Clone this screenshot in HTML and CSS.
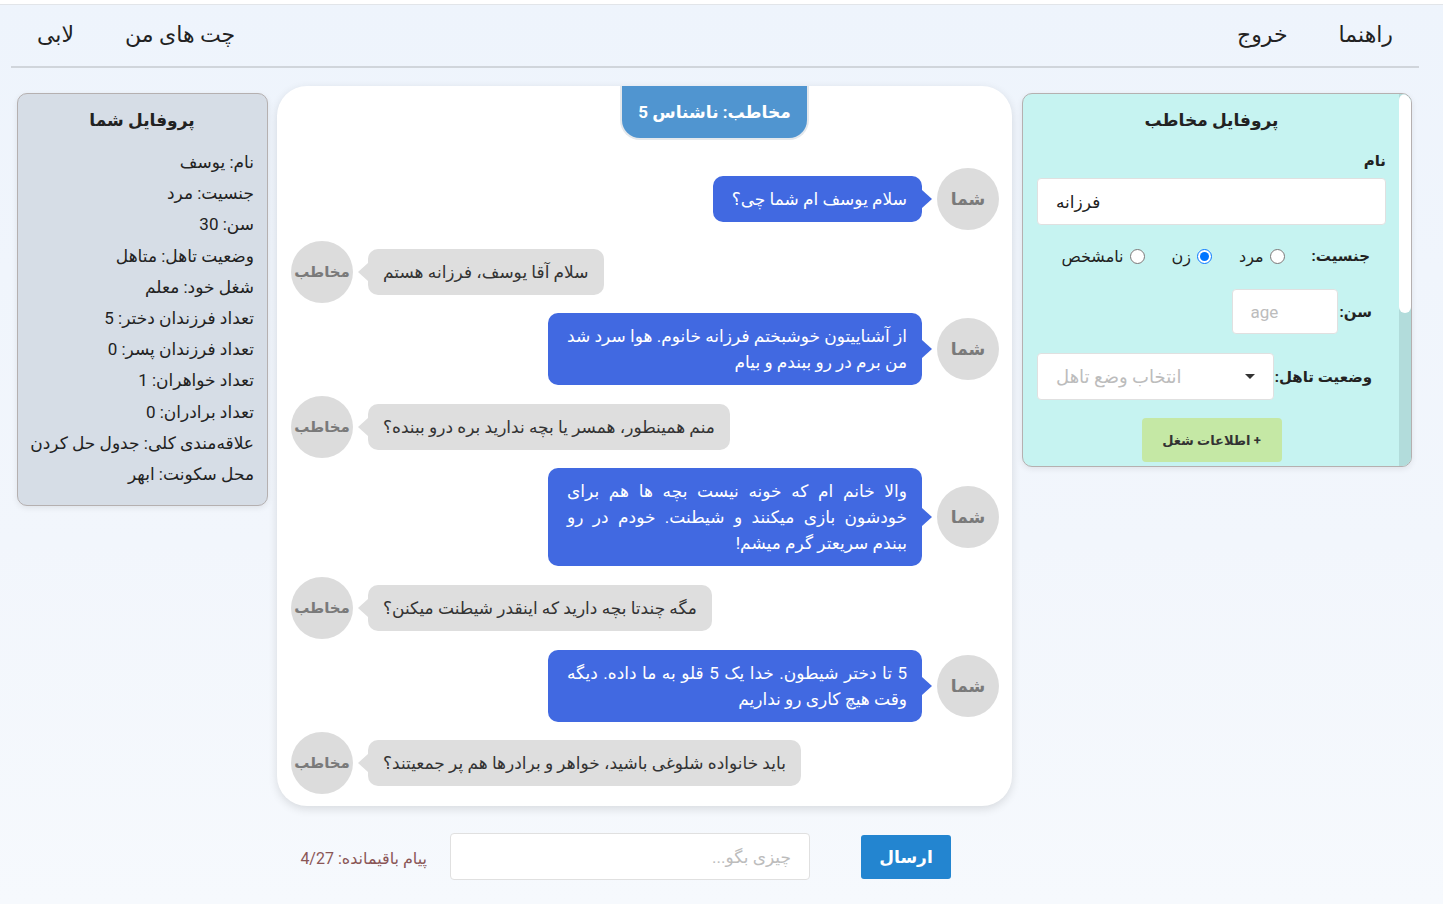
FILE: index.html
```html
<!DOCTYPE html>
<html lang="fa" dir="rtl">
<head>
<meta charset="utf-8">
<title>چت</title>
<link rel="stylesheet" href="styles.css">
</head>
<body>
<div class="page">
  <nav class="nav">
    <div class="nav-group">
      <a class="nav-link">راهنما</a>
      <a class="nav-link">خروج</a>
    </div>
    <div class="nav-group">
      <a class="nav-link">چت های من</a>
      <a class="nav-link">لابی</a>
    </div>
  </nav>

  <main class="layout">
    <aside class="contact-card">
      <div class="scrollbar"><div class="scroll-thumb"></div></div>
      <div class="contact-inner">
        <h3 class="card-title">پروفایل مخاطب</h3>
        <label class="field-label">نام</label>
        <input class="text-input name-input" type="text" value="فرزانه" dir="ltr">
        <div class="gender-row">
          <span class="inline-label">جنسیت:</span>
          <label class="radio"><input type="radio" name="g"> مرد</label>
          <label class="radio"><input type="radio" name="g" checked> زن</label>
          <label class="radio"><input type="radio" name="g"> نامشخص</label>
        </div>
        <div class="age-row">
          <span class="inline-label">سن:</span>
          <input class="text-input age-input" type="text" placeholder="age" dir="ltr">
        </div>
        <div class="marital-row">
          <span class="inline-label">وضعیت تاهل:</span>
          <div class="select-box">
            <span class="caret"></span>
            <span class="select-placeholder">انتخاب وضع تاهل</span>
          </div>
        </div>
        <div class="job-wrap">
          <button class="job-btn">+ اطلاعات شغل</button>
        </div>
      </div>
    </aside>

    <section class="chat-col">
      <div class="chat-card">
        <div class="chat-tab">مخاطب: ناشناس 5</div>
        <div class="messages">
          <div class="msg me">
            <div class="avatar">شما</div>
            <div class="bubble">سلام یوسف ام شما چی؟</div>
          </div>
          <div class="msg other">
            <div class="avatar">مخاطب</div>
            <div class="bubble">سلام آقا یوسف، فرزانه هستم</div>
          </div>
          <div class="msg me">
            <div class="avatar">شما</div>
            <div class="bubble">از آشناییتون خوشبختم فرزانه خانوم. هوا سرد شد من برم در رو ببندم و بیام</div>
          </div>
          <div class="msg other">
            <div class="avatar">مخاطب</div>
            <div class="bubble">منم همینطور، همسر یا بچه ندارید بره درو ببنده؟</div>
          </div>
          <div class="msg me">
            <div class="avatar">شما</div>
            <div class="bubble">والا خانم ام که خونه نیست بچه ها هم برای خودشون بازی میکنند و شیطنت. خودم در رو ببندم سریعتر گرم میشم!</div>
          </div>
          <div class="msg other">
            <div class="avatar">مخاطب</div>
            <div class="bubble">مگه چندتا بچه دارید که اینقدر شیطنت میکنن؟</div>
          </div>
          <div class="msg me">
            <div class="avatar">شما</div>
            <div class="bubble">5 تا دختر شیطون. خدا یک 5 قلو به ما داده. دیگه وقت هیچ کاری رو نداریم</div>
          </div>
          <div class="msg other">
            <div class="avatar">مخاطب</div>
            <div class="bubble">باید خانواده شلوغی باشید، خواهر و برادرها هم پر جمعیتند؟</div>
          </div>
        </div>
      </div>
      <div class="composer">
        <button class="send-btn">ارسال</button>
        <input class="text-input msg-input" type="text" placeholder="چیزی بگو...">
        <span class="remaining">پیام باقیمانده: 4/27</span>
      </div>
    </section>

    <aside class="my-card">
      <h3 class="card-title">پروفایل شما</h3>
      <ul class="info-list">
        <li>نام: یوسف</li>
        <li>جنسیت: مرد</li>
        <li>سن: 30</li>
        <li>وضعیت تاهل: متاهل</li>
        <li>شغل خود: معلم</li>
        <li>تعداد فرزندان دختر: 5</li>
        <li>تعداد فرزندان پسر: 0</li>
        <li>تعداد خواهران: 1</li>
        <li>تعداد برادران: 0</li>
        <li>علاقه‌مندی کلی: جدول حل کردن</li>
        <li>محل سکونت: ابهر</li>
      </ul>
    </aside>
  </main>
</div>
</body>
</html>
```

FILE: styles.css
```css
* { box-sizing: border-box; }

html, body {
  margin: 0;
  padding: 0;
}

body {
  font-family: Roboto, "DejaVu Sans", sans-serif;
  color: #222;
  background: linear-gradient(180deg, #eef4fc 0%, #f2f6fc 60%, #f6f9fd 100%);
  min-height: 904px;
  border-top: 4px solid #ffffff;
}

.page {
  border-top: 1px solid #e2e5e9;
  min-height: 899px;
}

.nav {
  display: flex;
  justify-content: space-between;
  align-items: center;
  height: 63px;
  margin: 0 24px 0 11px;
  padding: 0 26px 2px;
  border-bottom: 2px solid #d0d5db;
}

.nav-group {
  display: flex;
  gap: 51px;
}

.nav-link {
  font-size: 22px;
  color: #222;
}

.layout {
  display: flex;
  align-items: flex-start;
  padding: 20px 31px 0 17px;
}

/* contact profile (right) */
.contact-card {
  display: flex;
  width: 390px;
  height: 374px;
  margin-top: 5px;
  background: #c6f3f1;
  border: 1px solid #b5b0b0;
  border-radius: 10px;
  overflow: hidden;
  box-shadow: 0 2px 6px rgba(0,0,0,0.08);
}

.contact-inner {
  flex: 1;
  min-width: 0;
  padding: 13px 13px 0 14px;
}

.scrollbar {
  flex: none;
  width: 12px;
  background: #b2dcdb;
}

.scroll-thumb {
  height: 219px;
  background: #ffffff;
  border-radius: 6px;
}

.card-title {
  margin: 0;
  text-align: center;
  font-size: 17px;
  font-weight: bold;
  line-height: 26px;
}

.field-label {
  display: block;
  margin-top: 16px;
  font-size: 15px;
  font-weight: bold;
  line-height: 24px;
}

.text-input {
  font-family: inherit;
  font-size: 17px;
  border: 1px solid #e0e0e0;
  border-radius: 4px;
  background: #fff;
  color: #222;
  outline: none;
}

.text-input::placeholder { color: #bcbcbc; }

.name-input {
  display: block;
  width: 100%;
  height: 47px;
  margin-top: 5px;
  padding: 0 18px;
  text-align: left;
}

.gender-row {
  display: flex;
  align-items: center;
  height: 34px;
  margin-top: 14px;
  padding-right: 16px;
  gap: 27px;
  font-size: 16px;
}

.inline-label {
  font-weight: bold;
  font-size: 15px;
}

.radio {
  display: flex;
  align-items: center;
  gap: 6px;
}

.radio input {
  margin: 0;
  width: 15px;
  height: 15px;
}

.age-row {
  display: flex;
  align-items: center;
  margin-top: 16px;
  padding-right: 14px;
  gap: 2px;
}

.age-input {
  width: 106px;
  height: 45px;
  padding: 0 18px;
}

.marital-row {
  display: flex;
  align-items: center;
  margin-top: 19px;
  padding-right: 14px;
  gap: 1px;
}

.select-box {
  flex: 1;
  height: 47px;
  background: #fff;
  border: 1px solid #e0e0e0;
  border-radius: 4px;
  display: flex;
  align-items: center;
  justify-content: space-between;
  padding: 0 18px;
}

.caret {
  width: 0;
  height: 0;
  border-left: 5px solid transparent;
  border-right: 5px solid transparent;
  border-top: 5px solid #333;
}

.select-placeholder {
  color: #bcbcbc;
  font-size: 18px;
}

.job-wrap {
  display: flex;
  justify-content: center;
  margin-top: 18px;
}

.job-btn {
  width: 140px;
  height: 44px;
  background: #c5e8a5;
  border: none;
  border-radius: 4px;
  font-family: inherit;
  font-size: 13px;
  font-weight: bold;
  color: #333;
}

/* chat column */
.chat-col {
  width: 735px;
  margin: 0 10px 0 9px;
}

.chat-card {
  background: #fff;
  border-radius: 30px;
  height: 720px;
  box-shadow: 0 3px 10px rgba(0,0,0,0.12);
  padding: 0 13px 13px 14px;
}

.chat-tab {
  width: 189px;
  height: 54px;
  margin-top: -2px;
  margin-right: 190px;
  background: #5095d0;
  border: 2px solid #e4e8ec;
  border-top: none;
  border-radius: 0 0 20px 20px;
  color: #fff;
  font-weight: bold;
  font-size: 17px;
  display: flex;
  align-items: center;
  justify-content: center;
}

.messages {
  display: flex;
  flex-direction: column;
  gap: 10.6px;
  margin-top: 28px;
}

.msg {
  display: flex;
  align-items: center;
  gap: 15px;
}

.msg.other {
  direction: ltr;
}

.avatar {
  flex: none;
  width: 62px;
  height: 62px;
  border-radius: 50%;
  background: #dcdcdc;
  color: #7a7a7a;
  font-weight: bold;
  font-size: 17px;
  display: flex;
  align-items: center;
  justify-content: center;
  direction: rtl;
  white-space: nowrap;
}

.msg.other .avatar {
  font-size: 15px;
}

.bubble {
  position: relative;
  max-width: 374px;
  padding: 10px 15px 10px 19px;
  border-radius: 10px;
  font-size: 17px;
  line-height: 26px;
  direction: rtl;
  text-align: justify;
}

.msg.me .bubble {
  background: #4169e1;
  color: #fff;
}

.msg.other .bubble {
  background: #dedede;
  color: #333;
  max-width: 460px;
  padding: 10px 15px;
}

.bubble::after {
  content: "";
  position: absolute;
  top: 50%;
  margin-top: -9px;
  border-top: 9px solid transparent;
  border-bottom: 9px solid transparent;
}

.msg.me .bubble::after {
  right: -10px;
  border-left: 10px solid #4169e1;
}

.msg.other .bubble::after {
  left: -10px;
  border-right: 10px solid #dedede;
}

/* composer */
.composer {
  display: flex;
  align-items: center;
  margin-top: 27px;
  padding-right: 61px;
}

.send-btn {
  width: 90px;
  height: 44px;
  background: #2385d0;
  color: #fff;
  border: none;
  border-radius: 3px;
  font-family: inherit;
  font-size: 17px;
  font-weight: bold;
}

.msg-input {
  width: 360px;
  height: 47px;
  margin-right: 51px;
  padding: 0 18px;
}

.remaining {
  margin-right: 23px;
  color: #8a5656;
  font-size: 16px;
  padding-top: 4px;
}

/* my profile (left) */
.my-card {
  width: 251px;
  height: 413px;
  margin-top: 5px;
  background: #d6dde6;
  border: 1px solid #b5b0b0;
  border-radius: 10px;
  padding: 13px 13px 0 12px;
  box-shadow: 0 2px 6px rgba(0,0,0,0.08);
}

.info-list {
  list-style: none;
  margin: 14px 0 0;
  padding: 0;
  font-size: 17px;
  line-height: 31.2px;
}
```
